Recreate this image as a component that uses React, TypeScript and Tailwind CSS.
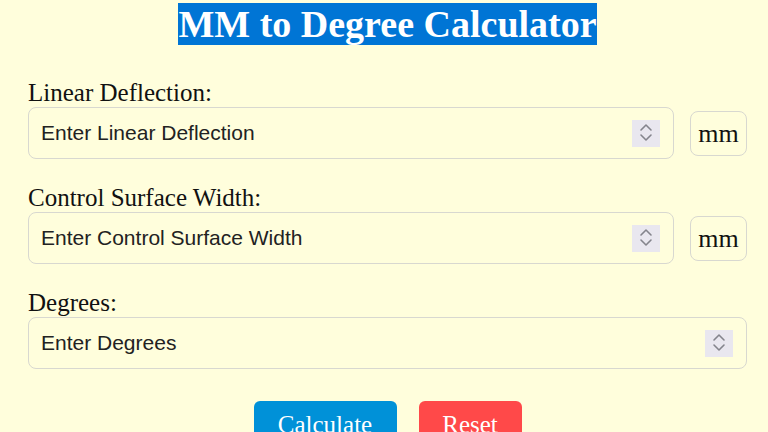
const serif = { fontFamily: '"Liberation Serif", "Times New Roman", serif' }

// up/down arrows of the number stepper
function Spinner() {
  return (
    <div className="h-[27px] w-[28px] shrink-0 bg-[#e9e7ef]">
      <svg width="28" height="27" viewBox="0 0 28 27" fill="none" stroke="#84848c" strokeWidth="1.6" strokeLinecap="round" strokeLinejoin="round">
        <path d="M9 10 L14 5 L19 10" />
        <path d="M9 15 L14 20 L19 15" />
      </svg>
    </div>
  )
}

interface FieldProps {
  label: string
  placeholder: string
  unit?: string
}

function Field({ label, placeholder, unit }: FieldProps) {
  return (
    <div className="mb-[25px]">
      <label className="block h-[28px] text-[25px] leading-[28px] text-[#111]" style={serif}>
        {label}
      </label>
      <div className="flex items-center gap-4">
        <div className="flex h-[52px] flex-1 items-center rounded-[8px] border border-[#d8d8d0] pl-[12px] pr-[13px]">
          <input
            type="text"
            placeholder={placeholder}
            className="min-w-0 flex-1 bg-transparent text-[21px] text-[#222] outline-none placeholder:text-[#222]"
            style={{ fontFamily: '"Liberation Sans", Arial, sans-serif' }}
          />
          <Spinner />
        </div>
        {unit && (
          <div
            className="flex h-[45px] w-[57px] shrink-0 items-center justify-center rounded-[8px] border border-[#d8d8d0] text-[26px] text-[#111]"
            style={serif}
          >
            {unit}
          </div>
        )}
      </div>
    </div>
  )
}

export default function App() {
  return (
    <div className="h-[432px] w-full overflow-hidden bg-[#fffedc]">
      <div className="ml-[28px] w-[719px] pt-[4px]">
        <h1 className="mb-[34px] text-center text-[38px] font-bold leading-[41px]" style={serif}>
          <span className="bg-[#0075d5] text-white">MM to Degree Calculator</span>
        </h1>
        <Field label="Linear Deflection:" placeholder="Enter Linear Deflection" unit="mm" />
        <Field label="Control Surface Width:" placeholder="Enter Control Surface Width" unit="mm" />
        <Field label="Degrees:" placeholder="Enter Degrees" />
        <div className="mt-[32px] flex justify-center gap-[22px]" style={serif}>
          <button className="h-[48px] w-[143px] rounded-[6px] bg-[#0091d8] text-[25px] text-white">
            Calculate
          </button>
          <button className="h-[48px] w-[103px] rounded-[6px] bg-[#ff4949] text-[25px] text-white">
            Reset
          </button>
        </div>
      </div>
    </div>
  )
}
